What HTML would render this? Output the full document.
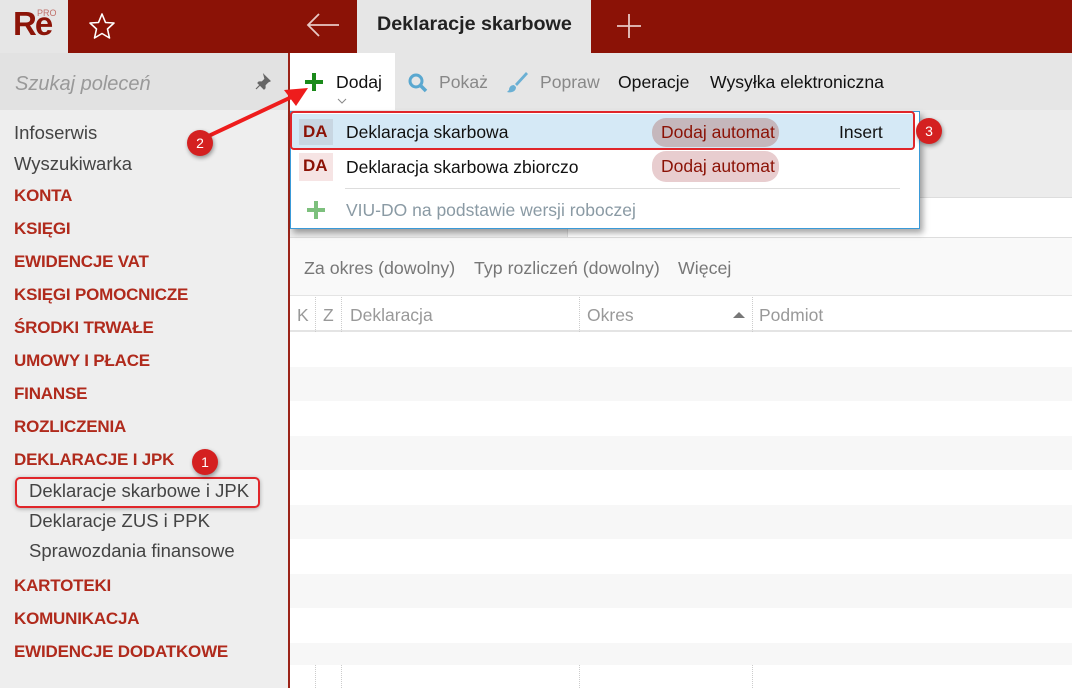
<!DOCTYPE html>
<html><head><meta charset="utf-8"><style>
*{margin:0;padding:0;box-sizing:border-box}
body{width:1072px;height:688px;overflow:hidden;position:relative;font-family:"Liberation Sans","DejaVu Sans",sans-serif;background:#fff}
.a{position:absolute}
.sec{position:absolute;left:14px;font-size:17px;font-weight:bold;color:#b02a1c;letter-spacing:-0.2px}
.it{position:absolute;font-size:18.5px;color:#444}
.badge{position:absolute;width:26px;height:26px;border-radius:50%;background:#d42020;color:#fff;font-size:14px;text-align:center;line-height:26px;box-shadow:1px 2px 4px rgba(0,0,0,.4)}
.row{position:absolute;left:290px;width:782px;height:34px;background:#f7f7f7}
.tb{position:absolute;top:72px;font-size:17.6px}
.fl{position:absolute;top:258px;font-size:17.8px;color:#777}
.hd{position:absolute;top:305px;font-size:17.5px;color:#999}
.dd{position:absolute;font-size:17.5px}
</style></head><body>
<!-- top bar -->
<div class="a" style="left:0;top:0;width:68px;height:53px;background:#e6e6e6"></div>
<div class="a" style="left:13px;top:5px;font-size:33px;font-weight:bold;color:#8c1408;letter-spacing:-2px">Re</div>
<div class="a" style="left:37px;top:8px;font-size:9px;color:#c0706a">PRO</div>
<div class="a" style="left:68px;top:0;width:289px;height:53px;background:#8b1206"></div>
<svg class="a" style="left:88px;top:12px" width="28" height="28" viewBox="0 0 28 28"><polygon points="14,2 17.5,10.5 26,11 19.5,17 21.5,26 14,21.5 6.5,26 8.5,17 2,11 10.5,10.5" fill="none" stroke="#fff" stroke-width="1.6" stroke-linejoin="round"/></svg>
<svg class="a" style="left:305px;top:12px" width="36" height="26" viewBox="0 0 36 26"><path d="M34 13H3M14 2L3 13l11 11" fill="none" stroke="#e8c8c4" stroke-width="1.8"/></svg>
<div class="a" style="left:357px;top:0;width:234px;height:53px;background:#e6e6e6"></div>
<div class="a" style="left:377px;top:13px;font-size:19.7px;font-weight:bold;color:#222">Deklaracje skarbowe</div>
<div class="a" style="left:591px;top:0;width:481px;height:53px;background:#8b1206"></div>
<svg class="a" style="left:616px;top:13px" width="26" height="26"><path d="M13 1v24M1 13h24" stroke="#e8c8c4" stroke-width="1.8"/></svg>
<!-- sidebar -->
<div class="a" style="left:0;top:53px;width:288px;height:635px;background:#eeeeee"></div>
<div class="a" style="left:0;top:53px;width:288px;height:57px;background:#e2e2e2"></div>
<div class="a" style="left:15px;top:73px;font-size:20px;font-style:italic;color:#999">Szukaj poleceń</div>
<svg class="a" style="left:254px;top:73px" width="18" height="18" viewBox="0 0 18 18"><path d="M10 2l6 6-2 1-3 3 0 3-1 1-6-6 1-1 3 0 3-3z M6 12l-4 4" fill="#666" stroke="#666" stroke-width="1.2"/></svg>
<div class="a" style="left:288px;top:53px;width:2px;height:635px;background:#9b2318"></div>
<div class="it" style="left:14px;top:122px">Infoserwis</div>
<div class="it" style="left:14px;top:153px">Wyszukiwarka</div>
<div class="sec" style="top:186px">KONTA</div>
<div class="sec" style="top:219px">KSIĘGI</div>
<div class="sec" style="top:252px">EWIDENCJE VAT</div>
<div class="sec" style="top:285px">KSIĘGI POMOCNICZE</div>
<div class="sec" style="top:318px">ŚRODKI TRWAŁE</div>
<div class="sec" style="top:351px">UMOWY I PŁACE</div>
<div class="sec" style="top:384px">FINANSE</div>
<div class="sec" style="top:417px">ROZLICZENIA</div>
<div class="sec" style="top:450px">DEKLARACJE I JPK</div>
<div class="a" style="left:15px;top:477px;width:245px;height:31px;border:2px solid #e0262a;border-radius:5px;box-shadow:0 1px 4px rgba(0,0,0,.3)"></div>
<div class="it" style="left:29px;top:480px">Deklaracje skarbowe i JPK</div>
<div class="it" style="left:29px;top:510px">Deklaracje ZUS i PPK</div>
<div class="it" style="left:29px;top:540px">Sprawozdania finansowe</div>
<div class="sec" style="top:576px">KARTOTEKI</div>
<div class="sec" style="top:609px">KOMUNIKACJA</div>
<div class="sec" style="top:642px">EWIDENCJE DODATKOWE</div>
<div class="badge" style="left:192px;top:449px">1</div>
<!-- toolbar -->
<div class="a" style="left:290px;top:53px;width:782px;height:57px;background:#e6e6e6"></div>
<div class="a" style="left:290px;top:53px;width:105px;height:57px;background:#fff"></div>
<svg class="a" style="left:304px;top:72px" width="20" height="20"><path d="M10 1v18M1 10h18" stroke="#1a8a1a" stroke-width="4"/></svg>
<div class="tb" style="left:336px;color:#111">Dodaj</div>
<svg class="a" style="left:337px;top:98px" width="10" height="6"><path d="M1 1l4 4 4-4" fill="none" stroke="#888"/></svg>
<svg class="a" style="left:407px;top:72px" width="22" height="22"><circle cx="9" cy="9" r="6" fill="none" stroke="#5aa8d0" stroke-width="3"/><path d="M13 13l6 6" stroke="#5aa8d0" stroke-width="3.5"/></svg>
<div class="tb" style="left:439px;color:#888">Pokaż</div>
<svg class="a" style="left:505px;top:70px" width="24" height="24"><path d="M21 2L10 14l2 2L23 4z" fill="#6bb0d4"/><path d="M9 15c-3 0-5 2-5 5l-2 2c4 1 9 0 9-5z" fill="#6bb0d4"/></svg>
<div class="tb" style="left:540px;color:#888">Popraw</div>
<div class="tb" style="left:618px;color:#111">Operacje</div>
<div class="tb" style="left:710px;color:#111">Wysyłka elektroniczna</div>
<!-- content -->
<div class="a" style="left:290px;top:110px;width:782px;height:127px;background:#ececec"></div>
<div class="a" style="left:567px;top:197px;width:505px;height:40px;background:#fff;border-top:1px solid #ddd;border-left:1px solid #ddd"></div>
<div class="a" style="left:290px;top:237px;width:782px;height:58px;background:#f9f9f9;border-top:1px solid #ddd"></div>
<div class="fl" style="left:304px">Za okres (dowolny)</div>
<div class="fl" style="left:474px">Typ rozliczeń (dowolny)</div>
<div class="fl" style="left:678px">Więcej</div>
<div class="a" style="left:290px;top:295px;width:782px;height:37px;background:#fff;border-top:1px solid #e4e4e4;border-bottom:2px solid #e4e4e4"></div>
<div class="hd" style="left:297px">K</div>
<div class="hd" style="left:323px">Z</div>
<div class="hd" style="left:350px">Deklaracja</div>
<div class="hd" style="left:587px">Okres</div>
<svg class="a" style="left:733px;top:311px" width="12" height="7"><path d="M0 7L6 1 12 7z" fill="#777"/></svg>
<div class="hd" style="left:759px">Podmiot</div>
<div class="a" style="left:315px;top:297px;height:35px;border-left:1px dotted #ccc"></div>
<div class="a" style="left:341px;top:297px;height:35px;border-left:1px dotted #ccc"></div>
<div class="a" style="left:579px;top:297px;height:35px;border-left:1px dotted #ccc"></div>
<div class="a" style="left:752px;top:297px;height:35px;border-left:1px dotted #ccc"></div>
<div class="row" style="top:367px"></div>
<div class="row" style="top:436px"></div>
<div class="row" style="top:505px"></div>
<div class="row" style="top:574px"></div>
<div class="row" style="top:643px;height:22px"></div>
<div class="a" style="left:315px;top:665px;height:23px;border-left:1px dotted #ccc"></div>
<div class="a" style="left:341px;top:665px;height:23px;border-left:1px dotted #ccc"></div>
<div class="a" style="left:579px;top:665px;height:23px;border-left:1px dotted #ccc"></div>
<div class="a" style="left:752px;top:665px;height:23px;border-left:1px dotted #ccc"></div>
<!-- dropdown -->
<div class="a" style="left:290px;top:111px;width:630px;height:118px;background:#fff;border:1px solid #3a9ad8;box-shadow:3px 4px 6px rgba(0,0,0,.35)"></div>
<div class="a" style="left:292px;top:114px;width:622px;height:35px;background:#d5e9f6"></div>
<div class="a" style="left:290px;top:111px;width:625px;height:39px;border:2px solid #e0262a;border-radius:4px"></div>
<div class="a" style="left:299px;top:119px;width:34px;height:26px;background:#c8d6e2"></div>
<div class="a" style="left:303px;top:122px;font-size:17px;font-weight:bold;color:#8b1206">DA</div>
<div class="dd" style="left:346px;top:122px;color:#111">Deklaracja skarbowa</div>
<div class="a" style="left:652px;top:118px;width:127px;height:29px;border-radius:14px;background:#c5b7bc"></div>
<div class="dd" style="left:661px;top:122px;color:#8b1206">Dodaj automat</div>
<div class="dd" style="left:839px;top:122px;color:#111">Insert</div>
<div class="a" style="left:299px;top:153px;width:34px;height:28px;background:#f6e4e4"></div>
<div class="a" style="left:303px;top:156px;font-size:17px;font-weight:bold;color:#8b1206">DA</div>
<div class="dd" style="left:346px;top:157px;color:#111">Deklaracja skarbowa zbiorczo</div>
<div class="a" style="left:652px;top:151px;width:127px;height:31px;border-radius:14px;background:#e8cdcf"></div>
<div class="dd" style="left:661px;top:156px;color:#8b1206">Dodaj automat</div>
<div class="a" style="left:345px;top:188px;width:555px;height:1px;background:#ddd"></div>
<svg class="a" style="left:306px;top:200px" width="20" height="20"><path d="M10 1v18M1 10h18" stroke="#7dc07d" stroke-width="4"/></svg>
<div class="dd" style="left:346px;top:200px;color:#8a9aa4">VIU-DO na podstawie wersji roboczej</div>
<div class="badge" style="left:916px;top:118px">3</div>
<!-- arrow -->
<svg class="a" style="left:180px;top:80px" width="140" height="80"><path d="M20 60L118 14" stroke="#ee1c1c" stroke-width="4"/><path d="M128 8L104 10 116 26z" fill="#ee1c1c"/></svg>
<div class="badge" style="left:187px;top:130px">2</div>
</body></html>
